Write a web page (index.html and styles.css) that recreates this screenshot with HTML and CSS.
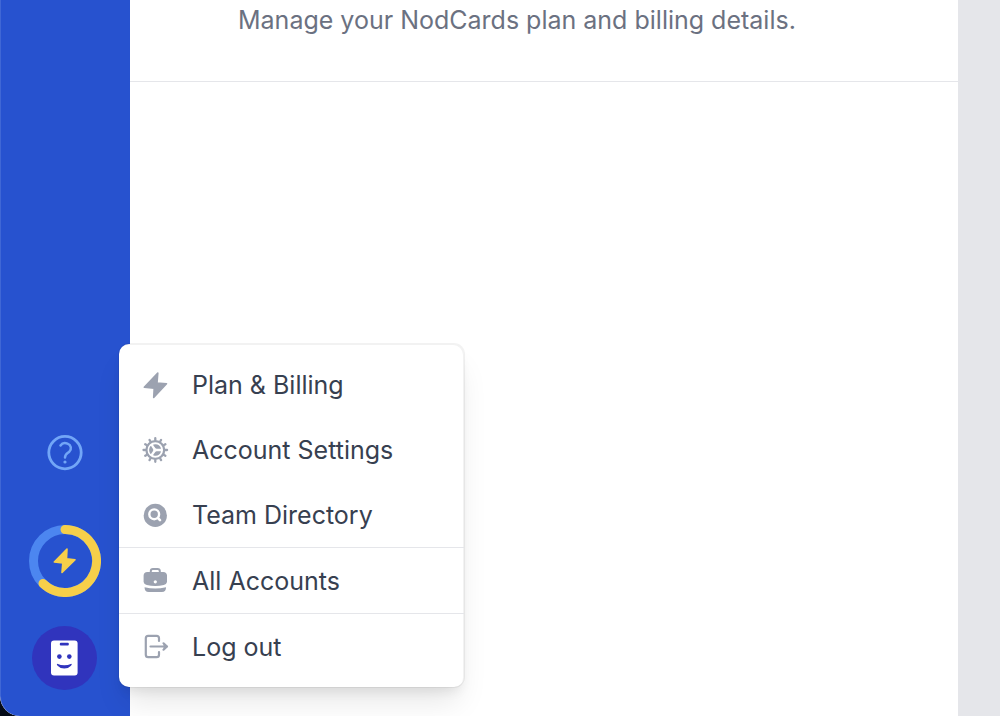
FILE: index.html
```html
<!DOCTYPE html>
<html lang="en">
<head>
<meta charset="utf-8">
<title>Plan &amp; Billing</title>
<link rel="stylesheet" href="styles.css">
</head>
<body>
<div class="app">
  <aside class="sidebar">
    <button class="side-button help" aria-label="Help">
      <svg width="36" height="36" viewBox="0 0 36 36" fill="none" stroke="currentColor" stroke-width="2.8" stroke-linecap="round">
        <circle cx="18" cy="17.600" r="16.2"/>
        <path d="M13.500 10.500C15 8.300 18 7.700 20.500 8.700C24.300 10.200 24.900 14.200 22.300 16.700C20.400 18.400 18 19 18 22.500" stroke-width="2.500"/>
        <circle cx="18" cy="27" r="1.600" fill="currentColor" stroke="none"/>
      </svg>
    </button>
    <button class="side-button usage" aria-label="Plan usage">
      <svg width="72" height="72" viewBox="0 0 72 72" fill="none">
        <circle cx="36" cy="36" r="31.500" stroke="#4c86f0" stroke-width="9"/>
        <path d="M36 4.500A31.500 31.500 0 1 1 14 58.500" stroke="#f6cf4a" stroke-width="9" stroke-linecap="round"/>
        <path d="M38 24L37.500 33.800L46 34.800L33 47.500L33.800 38L25.300 37Z" fill="#f6cf4a" stroke="#f6cf4a" stroke-width="1.600" stroke-linejoin="round"/>
      </svg>
    </button>
    <button class="side-button avatar" aria-label="Account menu" aria-expanded="true">
      <svg width="27" height="36" viewBox="0 0 27 36">
        <rect y=".5" width="26.600" height="35" rx="3" fill="#fff"/>
        <g fill="#3034bd">
          <rect x="8.800" y="2.800" width="9" height="2.600" rx="1"/>
          <circle cx="8.400" cy="16.600" r="2.300"/>
          <circle cx="18.300" cy="16.600" r="2.300"/>
          <path d="M6.200 23.800Q13.300 26.800 20.400 23.800Q21.400 24.200 20 25.700Q17.400 28.600 13.300 28.600Q9.200 28.600 6.600 25.700Q5.200 24.200 6.200 23.800Z"/>
        </g>
      </svg>
    </button>
    <nav class="menu" aria-label="Account">
      <div class="menu-group">
        <a class="menu-item" href="#">
          <svg class="menu-icon" viewBox="0 0 28 28" fill="currentColor" stroke="currentColor" stroke-width="1.600" stroke-linejoin="round"><path d="M16.800 2L16 12L25.500 12.800L12.700 26.500L13.200 17.300L3.300 16.300Z"/></svg>
          Plan &amp; Billing
        </a>
        <a class="menu-item" href="#">
          <svg class="menu-icon" viewBox="0 0 28 28" fill="none" stroke="currentColor" stroke-linecap="round" stroke-width="2.300">
            <circle cx="14.300" cy="14" r="8.900"/>
            <path d="M14.300 4V2.200M14.300 24V25.800M4.300 14H2.500M24.300 14H26.100M9.300 5.300L8.500 3.900M19.300 5.300L20.100 3.900M9.300 22.700L8.500 24.100M19.300 22.700L20.100 24.100M5.600 9L4.200 8.200M23 9L24.400 8.200M5.600 19L4.200 19.800M23 19L24.400 19.800"/>
            <g fill="currentColor" stroke="none">
              <path d="M9.500 10Q10 9.800 10.400 10.400L12 13Q12.600 14 12 15L10.400 17.600Q10 18.200 9.500 18Q6.600 14 9.500 10Z"/>
              <path d="M12.500 8.600Q18 7.300 20 12.200Q20.100 12.800 19.300 12.800H15.700Q14.800 12.800 14.300 12L12.400 9.400Q12 8.800 12.500 8.600Z"/>
              <path d="M12.500 19.400Q18 20.700 20 15.800Q20.100 15.200 19.300 15.200H15.700Q14.800 15.200 14.300 16L12.400 18.600Q12 19.200 12.500 19.400Z"/>
            </g>
          </svg>
          Account Settings
        </a>
        <a class="menu-item" href="#">
          <svg class="menu-icon" viewBox="0 0 28 28" fill="none"><circle cx="14.300" cy="14.400" r="11.600" fill="currentColor"/><circle cx="13.200" cy="13.300" r="4.900" stroke="#fff" stroke-width="2.400"/><path d="M17 17.100L19 19.100" stroke="#fff" stroke-width="2.600" stroke-linecap="round"/></svg>
          Team Directory
        </a>
      </div>
      <div class="menu-group">
        <a class="menu-item" href="#">
          <svg class="menu-icon" viewBox="0 0 28 28" fill="none"><path d="M9.800 5.500V4Q9.800 2 12 2H16.600Q18.800 2 18.800 4V5.500" stroke="currentColor" stroke-width="2"/><path d="M6.300 5H22.300Q25.800 5 26 8.500V15Q25.600 17.300 22.800 18Q14.300 20 5.800 18Q3 17.300 2.600 15V8.500Q2.800 5 6.300 5ZM3.600 20.200Q14.300 22.600 25 20.200Q25.300 25 20.800 25H7.800Q3.300 25 3.600 20.200Z" fill="currentColor"/><circle cx="14.300" cy="14.800" r="1.600" fill="#fff"/></svg>
          All Accounts
        </a>
      </div>
      <div class="menu-group">
        <a class="menu-item" href="#">
          <svg class="menu-icon" viewBox="0 0 28 28" fill="none" stroke="currentColor" stroke-width="2.200" stroke-linecap="round" stroke-linejoin="round"><path d="M18 8V5.300Q18 2.900 15.600 2.900H7.200Q4.800 2.900 4.800 5.300V21.700Q4.800 24.100 7.200 24.100H15.600Q18 24.100 18 21.700V19M9.500 13.500H25.500"/><path d="M22.500 10.300L26 13.500L22.500 16.700" fill="currentColor"/></svg>
          Log out
        </a>
      </div>
    </nav>
  </aside>
  <main class="content">
    <header class="page-header">
      <p class="subtitle">Manage your NodCards plan and billing details.</p>
    </header>
  </main>
  <div class="gutter"></div>
</div>
</body>
</html>
```
FILE: styles.css
```css
* { box-sizing: border-box; }

body {
  margin: 0;
  background: #050b18;
  font-family: Inter, "Liberation Sans", sans-serif;
  font-size: 25px;
}

.app {
  display: flex;
  min-height: 100vh;
  overflow: hidden;
  border-bottom-left-radius: 20px;
  background: #fff;
}

.sidebar {
  position: relative;
  flex: 0 0 130px;
  display: flex;
  flex-direction: column;
  align-items: center;
  justify-content: flex-end;
  padding: 0 2px 26px 0;
  border-left: 1px solid #4067d5;
  border-bottom-left-radius: 20px;
  background: #2752cf;
}

.side-button {
  display: flex;
  align-items: center;
  justify-content: center;
  padding: 0;
  border: 0;
  background: none;
}

.help {
  margin-bottom: 54px;
  color: #72a6f7;
}

.usage { margin-bottom: 29px; }

.avatar {
  width: 65px;
  height: 64px;
  border-radius: 50%;
  background: #3034bd;
}

.menu {
  position: absolute;
  left: 118px;
  bottom: 29px;
  width: 345px;
  padding: 8px 0;
  border-radius: 10px;
  background: #fff;
  box-shadow: inset -1px 1px 0 rgba(0, 0, 0, 0.05), 0 0 0 1px rgba(0, 0, 0, 0.05), 0 20px 30px -6px rgba(0, 0, 0, 0.1), 0 8px 12px -4px rgba(0, 0, 0, 0.08);
}

.menu-group + .menu-group { border-top: 1px solid #e5e6ea; }

.menu-item {
  display: flex;
  align-items: center;
  gap: 23px;
  height: 65px;
  padding: 0 22px;
  color: #374050;
  text-decoration: none;
  white-space: nowrap;
}

.menu-icon {
  flex: none;
  width: 28px;
  height: 28px;
  color: #9ca2b0;
}

.content {
  flex: 1;
  min-width: 0;
}

.page-header {
  padding: 2px 108px 43px;
  border-bottom: 1px solid #e5e6ea;
}

.subtitle {
  margin: 0;
  color: #6b7181;
  line-height: 36px;
  white-space: nowrap;
}

.gutter {
  flex: 0 0 42px;
  background: #e5e6ea;
}
```
